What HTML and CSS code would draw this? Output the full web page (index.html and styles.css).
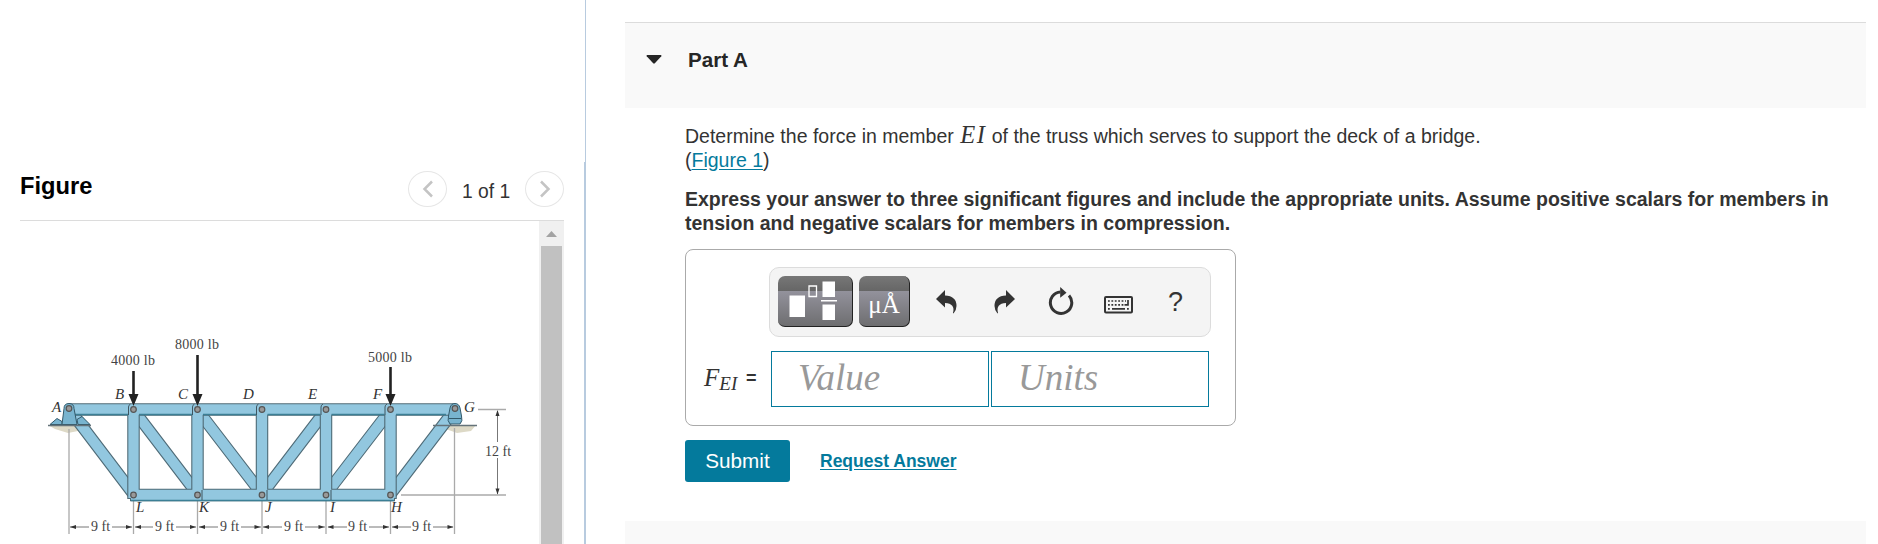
FILE: index.html
```
<!DOCTYPE html>
<html lang="en">

<head>
    <meta charset="UTF-8" />
    <meta name="viewport" content="width=device-width, initial-scale=1.0" />
    <title>Part A</title>
    <link rel="stylesheet" href="styles.css">
</head>

<body>
    <aside class="figure-pane">
        <div class="figure-header">
            <h2>Figure</h2>
            <div class="pager">
                <button class="round" aria-label="Previous">
                    <svg width="12" height="18" viewBox="0 0 12 18"><path d="M10 1.500L2.500 9l7.500 7.500" /></svg>
                </button>
                <span>1 of 1</span>
                <button class="round" aria-label="Next">
                    <svg width="12" height="18" viewBox="0 0 12 18"><path d="M2 1.500L9.500 9L2 16.500" /></svg>
                </button>
            </div>
        </div>
        <div class="figure-body">
            <svg class="truss" width="519" height="323" viewBox="20 221 519 323">
                <!-- ground under the supports -->
                <path d="M48 425h43l-8 5l-15 3l-13-4z" fill="#ddd9c6" />
                <path d="M433 425h43l-5 6l-14 2l-14-5z" fill="#ddd9c6" />

                <!-- extension lines -->
                <g stroke="#aaa" stroke-width="1.300">
                    <path d="M69 429v105M133.500 500v34M197.500 500v34M262 500v34M326 500v34M390.500 500v34M454.500 428v106" />
                    <path d="M478 409.500h28M401 495h105" />
                </g>

                <!-- diagonals -->
                <g class="edge">
                    <path d="M69 409L133.500 494M133.500 410L197.500 494M197.500 410L262 494M262 494L326 410M326 494L390.500 410M390.500 494L454.500 410" />
                </g>
                <g class="beam">
                    <path d="M69 409L133.500 494M133.500 410L197.500 494M197.500 410L262 494M262 494L326 410M326 494L390.500 410M390.500 494L454.500 410" />
                </g>
                <!-- chords and posts -->
                <g class="edge">
                    <path d="M69 409.500H455M130 495H395" />
                    <path d="M133.500 404V499M197.500 404V499M262 404V499M326 404V499M390.500 404V499" />
                </g>
                <g class="beam">
                    <path d="M69 409.500H455M131 495H394" />
                    <path d="M133.500 405V498M197.500 405V498M262 405V498M326 405V498M390.500 405V498" />
                </g>
                <path class="shade" d="M74 414.500H128M139 414.500h53M203 414.500h53M267.500 414.500h53M331.500 414.500h53M396 414.500h50M131 500.500h263" />
                <path class="joint" d="M128.500 415v-8q0-2 2-3M192.500 415v-8q0-2 2-3M256.500 415v-8q0-2 2-3M321 415v-8q0-2 2-3M385 415v-8q0-2 2-3M202 490v10M267 490v10M331 490v10" />

                <!-- pin support at A, roller at G -->
                <g class="support">
                    <path d="M50 424.500l7-6l5 3v3zM78 424.500l-1-5l5-3l8 8z" />
                    <path d="M62 424.500l2-16q0-5 5-5t5 5l3 16z" />
                    <path d="M450 424q-3-3-1.500-8l1.500-8q1-4.500 5-4.500t5 4.500l1.500 8q1.500 5-1.500 8z" />
                    <path d="M449 418.500h12" />
                </g>
                <path d="M48 425.500h43M433 425.500h44" stroke="#65737a" stroke-width="1.500" />

                <g class="pins">
                    <circle cx="69" cy="408.500" r="2.800" />
                    <circle cx="133.500" cy="409.500" r="2.800" />
                    <circle cx="197.500" cy="409.500" r="2.800" />
                    <circle cx="262" cy="409.500" r="2.800" />
                    <circle cx="326" cy="409.500" r="2.800" />
                    <circle cx="390.500" cy="409.500" r="2.800" />
                    <circle cx="455" cy="408.500" r="2.800" />
                    <circle cx="133.500" cy="495" r="2.800" />
                    <circle cx="197.500" cy="495" r="2.800" />
                    <circle cx="262" cy="495" r="2.800" />
                    <circle cx="326" cy="495" r="2.800" />
                    <circle cx="390.500" cy="495" r="2.800" />
                </g>

                <!-- loads -->
                <g stroke="#222" stroke-width="2.600">
                    <path d="M133.500 371v24M197.500 355v40M390.500 367v28" />
                </g>
                <path d="M128.500 394h10l-5 12zM192.500 394h10l-5 12zM385.500 394h10l-5 12z" fill="#222" />
                <g class="load">
                    <text x="111" y="365" textLength="44">4000 lb</text>
                    <text x="175" y="349" textLength="44">8000 lb</text>
                    <text x="368" y="361.500" textLength="44">5000 lb</text>
                </g>

                <g class="node">
                    <text x="52" y="412">A</text>
                    <text x="115" y="399">B</text>
                    <text x="178" y="399">C</text>
                    <text x="243" y="399">D</text>
                    <text x="308" y="399">E</text>
                    <text x="373" y="399">F</text>
                    <text x="464" y="411.500">G</text>
                    <text x="136" y="512">L</text>
                    <text x="199" y="512">K</text>
                    <text x="265" y="512">J</text>
                    <text x="330" y="512">I</text>
                    <text x="391" y="512">H</text>
                </g>

                <!-- dimensions -->
                <path class="dim" d="M70 527h19M112 527h20M135 527h18M176 527h20M199 527h19M241 527h20M263 527h19M305 527h20M328 527h19M369 527h20M392 527h19M433 527h20M497.500 411v31M497.500 458v36" />
                <path fill="#333" d="M70 527l6-2v4zM135 527l6-2v4zM199 527l6-2v4zM263 527l6-2v4zM327.500 527l6-2v4zM392 527l6-2v4z" />
                <path fill="#333" d="M132 527l-6-2v4zM196 527l-6-2v4zM260.500 527l-6-2v4zM324.500 527l-6-2v4zM389 527l-6-2v4zM453.500 527l-6-2v4zM497.500 410l-2 6h4zM497.500 494.500l-2-6h4z" />
                <g class="load">
                    <text x="91" y="531">9 ft</text>
                    <text x="155" y="531">9 ft</text>
                    <text x="220" y="531">9 ft</text>
                    <text x="284" y="531">9 ft</text>
                    <text x="348" y="531">9 ft</text>
                    <text x="412" y="531">9 ft</text>
                    <text x="485" y="456">12 ft</text>
                </g>
            </svg>
            <div class="scrollbar">
                <svg width="25" height="25" viewBox="0 0 25 25"><path d="M7 16h11l-5.500-6z" fill="#a3a3a3" /></svg>
                <div class="thumb"></div>
            </div>
        </div>
    </aside>

    <div class="divider"></div>

    <main>
        <header class="part-header">
            <svg width="16" height="9" viewBox="0 0 16 9"><path d="M1.200 0h13.600q1.200 .300 .500 1.300L8.600 8.500h-1.200L.700 1.300Q0 .300 1.200 0z" fill="#262626" /></svg>
            <h1>Part A</h1>
        </header>

        <section class="part-body">
            <p class="question">Determine the force in member <i>EI</i> of the truss which serves to support the deck of a bridge.<br>(<a href="#">Figure 1</a>)</p>
            <p class="instructions">Express your answer to three significant figures and include the appropriate units. Assume positive scalars for members in<br>tension and negative scalars for members in compression.</p>

            <div class="answer-box">
                <div class="toolbar">
                    <button class="dark templates" aria-label="Templates">
                        <svg width="75" height="51" viewBox="0 0 75 51">
                            <g fill="#fff">
                                <path d="M11.500 19.500H27V41H11.500zM44.500 5.500H57V21H44.500zM44.500 28.500H57V44H44.500zM43 24h16v1.600H43z" />
                            </g>
                            <path d="M31 10h7.500v10.500H31z" fill="none" stroke="#fff" stroke-width="1.300" />
                        </svg>
                    </button>
                    <button class="dark symbols">μÅ</button>
                    <button class="tool undo" aria-label="Undo">
                        <svg width="21" height="24" viewBox="0 0 21 24"><path d="M9 0v5.500Q20.500 6 20.500 16q0 4-3 7.500l-.5-.5Q19.500 13.500 9 13v4.500L0 9z" /></svg>
                    </button>
                    <button class="tool redo" aria-label="Redo">
                        <svg width="21" height="24" viewBox="0 0 21 24"><path d="M12 0v5.500Q.500 6 .500 16q0 4 3 7.500l.5-.5Q1.500 13.500 12 13v4.500L21 9z" /></svg>
                    </button>
                    <button class="tool reset" aria-label="Reset">
                        <svg width="26" height="28" viewBox="0 0 26 28"><path d="M12.500 5A10.700 10.700 0 1 0 21 8.500" fill="none" stroke="#333" stroke-width="3" /><path d="M12.200 0l6.300 5.700l-6.300 5z" /></svg>
                    </button>
                    <button class="tool keyboard" aria-label="Keyboard shortcuts">
                        <svg width="29" height="18" viewBox="0 0 29 18">
                            <rect x="1" y="1" width="27" height="15.500" rx="1" fill="none" stroke="#333" stroke-width="2" />
                            <path d="M4 5h18M4 8.800h17M4 12.800h2M23 12.800h2" fill="none" stroke="#333" stroke-width="1.700" stroke-dasharray="1.800 1.600" />
                            <path d="M8 12.800h13M20.500 8.800h3.500V4" fill="none" stroke="#333" stroke-width="1.700" />
                        </svg>
                    </button>
                    <button class="tool help">?</button>
                </div>
                <div class="answer-row">
                    <label><i>F<sub>EI</sub></i><span>=</span></label>
                    <input type="text" placeholder="Value" />
                    <input type="text" placeholder="Units" />
                </div>
            </div>

            <div class="actions">
                <button class="submit">Submit</button>
                <a href="#">Request Answer</a>
            </div>
        </section>

        <div class="next-part"></div>
    </main>
</body>

</html>
```
FILE: styles.css
```
* {
    box-sizing: border-box;
}

body {
    margin: 0;
    height: 544px;
    display: flex;
    overflow: hidden;
    background: #fff;
    color: #333;
    font-family: "Liberation Sans", Arial, sans-serif;
    font-size: 19.500px;
}

h1,
h2,
p {
    margin: 0;
}

button {
    margin: 0;
    padding: 0;
    border: 0;
    font-family: inherit;
}

svg {
    display: block;
}

a {
    color: #047a9c;
    text-underline-offset: 2px;
}

/* figure pane */
.figure-pane {
    width: 584px;
    padding: 162px 20px 0;
}

.figure-header {
    display: flex;
    justify-content: space-between;
    height: 59px;
    border-bottom: 1px solid #dcdcdc;
}

.figure-header h2 {
    padding-top: 11px;
    color: #000;
    font-size: 23.700px;
    line-height: 27px;
}

.pager {
    display: flex;
    padding-top: 9px;
}

.pager span {
    width: 78px;
    padding-top: 8px;
    text-align: center;
    line-height: 26px;
    font-size: 19.300px;
}

.round {
    display: flex;
    align-items: center;
    justify-content: center;
    width: 39px;
    height: 36px;
    border: 1px solid #e6e6e6;
    border-radius: 50%;
    background: #fff;
}

.round path {
    fill: none;
    stroke: #c4c4c4;
    stroke-width: 2.500;
}

.figure-body {
    display: flex;
    height: 323px;
}

.truss {
    font-family: "Liberation Serif", "Times New Roman", serif;
}

.edge path {
    fill: none;
    stroke: #4f6b77;
    stroke-width: 12.500;
}

.beam path {
    fill: none;
    stroke: #92c7df;
    stroke-width: 10.300;
}

.shade {
    fill: none;
    stroke: #3c7f95;
    stroke-width: 1.500;
}

.joint {
    fill: none;
    stroke: #3f5661;
    stroke-width: 1;
}

.support path {
    fill: #78b4cf;
    stroke: #335a6b;
    stroke-width: 1;
}

.pins circle {
    fill: #999;
    stroke: #555;
    stroke-width: 1.200;
}

.load text {
    fill: #444;
    font-size: 14px;
}

.node text {
    fill: #333;
    font-size: 15px;
    font-style: italic;
}

.dim {
    fill: none;
    stroke: #777;
}

.scrollbar {
    width: 25px;
    background: #f0f0f0;
}

.thumb {
    width: 21px;
    height: 298px;
    margin: 0 auto;
    background: #c1c1c1;
}

/* thin above the figure, thicker beside it */
.divider {
    width: 2px;
    background: linear-gradient(#b8cbdf, #b8cbdf) 1px 0 / 1px 162px no-repeat, linear-gradient(#b8cbdf, #b8cbdf) 0 162px / 2px 100% no-repeat;
}

/* question pane */
main {
    width: 1241px;
    margin: 22px 0 0 39px;
}

.part-header {
    display: flex;
    height: 86px;
    padding: 25px 0 0 21px;
    border-top: 1px solid #dcdcdc;
    background: #f9f9f9;
}

.part-header svg {
    margin: 7px 26px 0 0;
}

.part-header h1 {
    color: #262626;
    font-size: 20.600px;
    line-height: 24px;
}

.part-body {
    height: 413px;
    padding: 16px 0 0 60px;
    line-height: 24px;
}

.question {
    white-space: nowrap;
}

.question i {
    padding-left: 1px;
    letter-spacing: 1.500px;
    font-family: "Liberation Serif", "Times New Roman", serif;
    font-size: 24.500px;
    line-height: 20px;
}

.instructions {
    margin-top: 15px;
    font-weight: bold;
    white-space: nowrap;
}

.answer-box {
    width: 551px;
    height: 177px;
    margin-top: 14px;
    padding: 17px 20px 0 15px;
    border: 1px solid #aaa;
    border-radius: 8px;
}

.toolbar {
    display: flex;
    align-items: flex-start;
    width: 442px;
    height: 70px;
    margin-left: 68px;
    padding: 8px;
    border: 1px solid #dcdcdc;
    border-radius: 10px;
    background: #f4f4f4;
}

.dark {
    height: 51px;
    border-right: 1px solid #222;
    border-bottom: 1px solid #222;
    border-radius: 7px;
    background: linear-gradient(#777, #666 15px, #93929c 15px, #6e6e70);
    color: #fff;
}

.templates {
    width: 75px;
    margin-right: 6px;
}

.symbols {
    width: 51px;
    padding-top: 7px;
    font-family: "Liberation Serif", "Times New Roman", serif;
    font-size: 25px;
}

.tool {
    background: none;
    color: #333;
}

.tool path {
    fill: #333;
}

.tool path[fill="none"] {
    fill: none;
}

.undo {
    margin: 14px 0 0 26px;
}

.redo {
    margin: 14px 0 0 37px;
}

.reset {
    margin: 11px 0 0 33px;
}

.keyboard {
    margin: 20px 0 0 30px;
}

.help {
    margin: 11px 0 0 35px;
    font-size: 27px;
}

.answer-row {
    display: flex;
    margin-top: 14px;
}

.answer-row label {
    display: flex;
    width: 70px;
    padding: 15px 0 0 3px;
    font-size: 18px;
}

.answer-row label i {
    width: 42px;
    font-family: "Liberation Serif", "Times New Roman", serif;
    font-size: 25px;
}

.answer-row label span {
    font-weight: bold;
}

.answer-row sub {
    font-size: 19px;
    line-height: 0;
    vertical-align: -4px;
}

.answer-row input {
    width: 218px;
    height: 56px;
    margin-right: 2px;
    padding: 0 26px 3px;
    border: 1px solid #047a9c;
    font-family: "Liberation Serif", "Times New Roman", serif;
    font-size: 37px;
    font-style: italic;
}

.answer-row input::placeholder {
    color: #999;
}

.actions {
    display: flex;
    align-items: center;
    margin-top: 14px;
}

.submit {
    width: 105px;
    height: 42px;
    margin-right: 30px;
    border-radius: 3px;
    background: #047a9c;
    color: #fff;
    font-size: 20.700px;
}

.actions a {
    font-size: 17.500px;
    font-weight: bold;
}

.next-part {
    height: 23px;
    background: #f9f9f9;
}
```
